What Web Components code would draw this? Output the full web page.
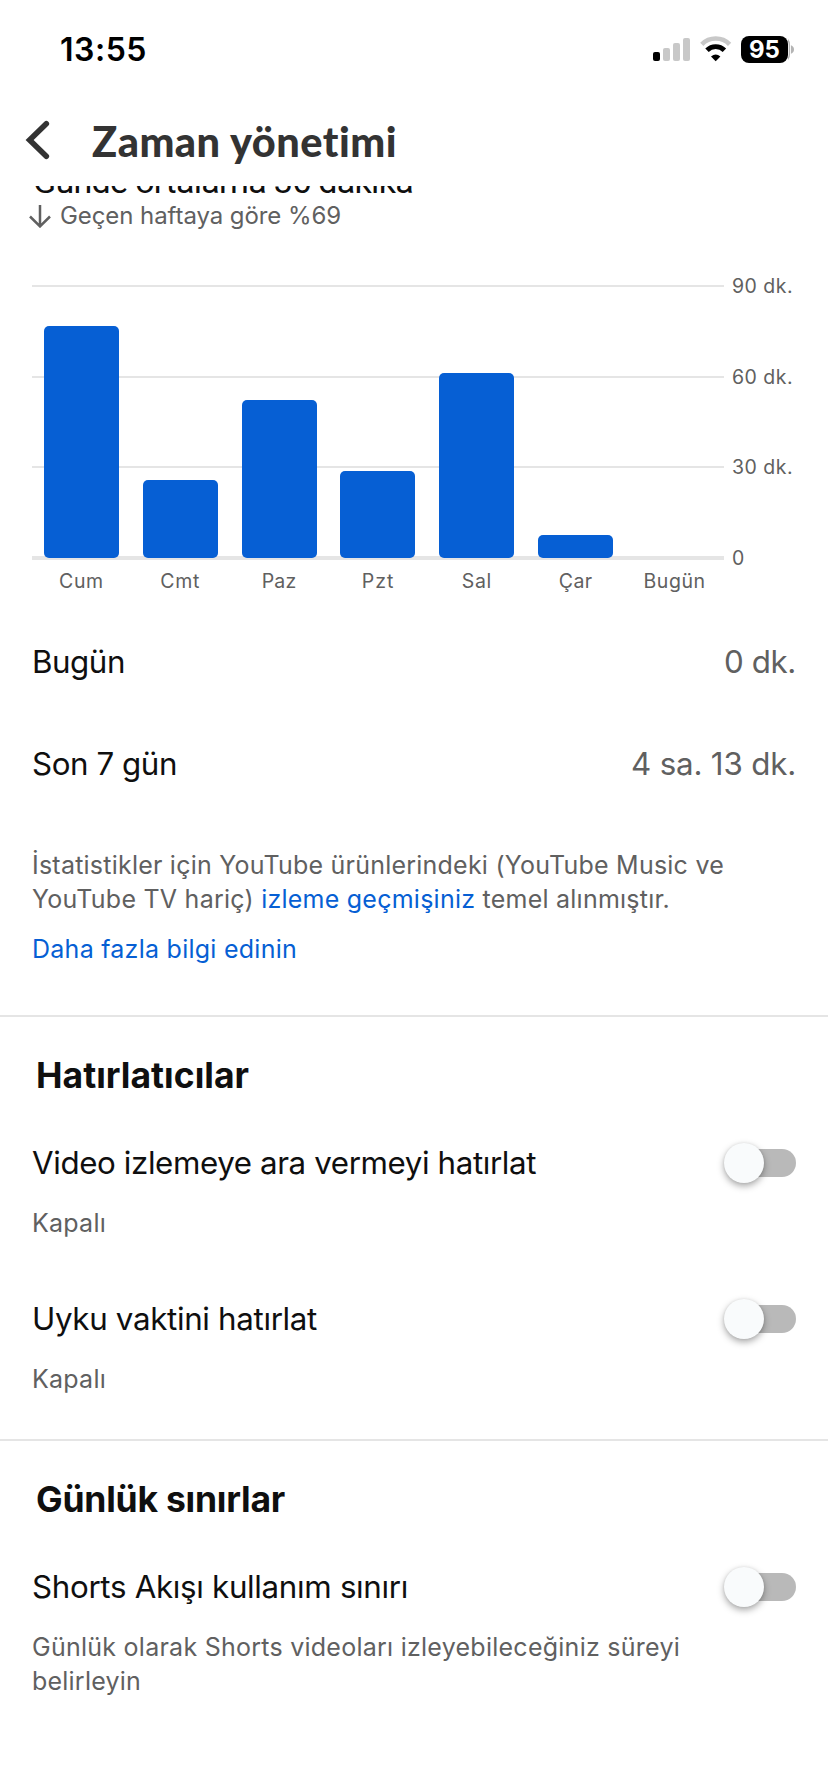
<!DOCTYPE html>
<html lang="tr">
<head>
<meta charset="utf-8">
<title>Zaman yönetimi</title>
<style>
  html, body { margin: 0; background: #fff; }
  body { width: 828px; height: 1792px; overflow: hidden; font-family: Inter, "Liberation Sans", sans-serif; color: #0f0f0f; }
</style>
</head>
<body>
<time-app></time-app>
<script>
const define = (name, html, setup) => customElements.define(name, class extends HTMLElement {
  constructor() {
    super();
    this.attachShadow({ mode: 'open' }).innerHTML = html;
  }
  connectedCallback() { if (setup) setup(this, this.shadowRoot); }
});

/* One line of text, tracked so that it fills the width given in "fit". */
define('fit-text', `
  <style>
    :host { display: block; white-space: nowrap; width: max-content; font-variant-ligatures: none; }
    span { display: inline-block; }
  </style>
  <span><slot></slot></span>`, (el, root) => {
    const target = parseFloat(el.getAttribute('fit'));
    if (!target) return;
    const span = root.querySelector('span');
    const length = el.textContent.length || el.getRootNode().host.textContent.length;
    const spacing = (target - span.getBoundingClientRect().width) / length;
    el.style.letterSpacing = spacing.toFixed(3) + 'px';
  });

define('status-bar', `
  <style>
    :host { display: flex; height: 88px; box-sizing: border-box; padding: 26px 33px 0 60px; justify-content: space-between; align-items: flex-start; color: #000; }
    .time { font-size: 32px; font-weight: 600; line-height: 48px; }
    .icons { display: flex; padding-top: 10px; }
    .signal { width: 38px; height: 27px; margin-right: 9px; }
    .wifi { width: 32px; height: 27px; margin-right: 9px; }
    .battery { display: flex; align-items: center; }
    .level { width: 47px; height: 27px; border-radius: 8px; background: #000; color: #fff; font-size: 24px; font-weight: 700; line-height: 27px; display: flex; justify-content: center; }
    .cap { width: 7px; height: 27px; }
  </style>
  <fit-text class="time" fit="87">13:55</fit-text>
  <div class="icons">
    <svg class="signal" viewBox="0 0 38 27">
      <rect x="0" y="16" width="7" height="9" rx="2" fill="#000"/>
      <g fill="#c8c8c8"><rect x="10" y="12" width="7" height="13" rx="2"/><rect x="20" y="7" width="7" height="18" rx="2"/><rect x="30" y="2" width="7" height="23" rx="2"/></g>
    </svg>
    <svg class="wifi" viewBox="0 0 32 27">
      <path d="M1.8 8.3A19.6 19.6 0 0 1 29.6 8.3" fill="none" stroke="#c8c8c8" stroke-width="4.6"/>
      <path d="M7 14.2A12.2 12.2 0 0 1 24.4 14.2" fill="none" stroke="#000" stroke-width="4.8"/>
      <path d="M15.7 25.2L11 20.4Q15.7 16.6 20.4 20.4Z" fill="#000"/>
    </svg>
    <div class="battery">
      <div class="level"><fit-text fit="31">95</fit-text></div>
      <svg class="cap" viewBox="0 0 7 27"><path d="M-3 1Q1.4 4 1.4 9V18Q1.4 23 -3 26" fill="none" stroke="#b4b4b4" stroke-width="1.4"/><path d="M3 9.3Q6 10.5 6 13.5T3 17.7Z" fill="#b4b4b4"/></svg>
    </div>
  </div>`);

define('page-header', `
  <style>
    :host { display: flex; height: 98px; align-items: flex-start; color: #333; background: #fff; }
    svg { width: 28px; height: 40px; margin: 32px 40px 0 24px; }
    .title { font-family: Lato, Roboto, sans-serif; font-weight: 900; font-size: 41.5px; line-height: 50px; padding-top: 28px; }
  </style>
  <svg viewBox="0 0 28 40"><path d="M22.3 3.7L5.6 20L22.3 36.3" fill="none" stroke="#333" stroke-width="5.6" stroke-linecap="round"/></svg>
  <fit-text class="title" fit="305"><slot></slot></fit-text>`);

define('usage-summary', `
  <style>
    :host { display: block; overflow: hidden; height: 46px; }
    .average { font-family: Roboto, sans-serif; font-size: 34px; line-height: 38px; margin: -24px 0 0 33px; }
    .trend { display: flex; gap: 9px; padding-left: 28px; color: #606060; font-size: 24px; line-height: 32px; }
    svg { width: 23px; height: 24px; margin-top: 4px; }
  </style>
  <fit-text class="average" fit="380">Günde ortalama 36 dakika</fit-text>
  <div class="trend">
    <svg viewBox="0 0 23 24"><path d="M12 1V22M2 12.5L12 22.4L22 12.5" fill="none" stroke="#606060" stroke-width="2.5"/></svg>
    <fit-text fit="281">Geçen haftaya göre %69</fit-text>
  </div>`);

define('usage-chart', `
  <style>
    :host { display: grid; grid-template-columns: 692px 1fr; column-gap: 8px; margin: 53px 0 0 32px; color: #606060; font-size: 19.5px; line-height: 24px; }
    .plot { display: grid; height: 275px; }
    .lines, .bars { grid-area: 1 / 1; }
    .lines, .axis { display: grid; grid-template-rows: 91px 90px 90px 4px; }
    .lines i { border-top: 2px solid #e5e5e5; }
    .lines i:last-child { border-width: 4px; }
    .bars { display: grid; grid-template-columns: repeat(7, 1fr); align-items: end; justify-items: center; padding-bottom: 2px; }
    .bars b { width: 75px; border-radius: 5px; background: #065fd4; }
    .axis fit-text { margin-top: -11px; height: 24px; }
    .axis fit-text:last-child { margin-top: -10px; }
    .days { display: grid; grid-template-columns: repeat(7, 1fr); justify-items: center; padding-top: 9px; }
  </style>
  <div class="plot">
    <div class="lines"><i></i><i></i><i></i><i></i></div>
    <div class="bars"></div>
  </div>
  <div class="axis"><fit-text fit="61">90 dk.</fit-text><fit-text fit="61">60 dk.</fit-text><fit-text fit="61">30 dk.</fit-text><fit-text>0</fit-text></div>
  <div class="days"></div>`, (el, root) => {
    const data = [['Cum', 232, 45], ['Cmt', 78, 40], ['Paz', 158, 35], ['Pzt', 87, 32.5], ['Sal', 185, 30], ['Çar', 23, 34], ['Bugün', 0, 62]];
    root.querySelector('.bars').innerHTML = data.map(d => `<b style="height:${d[1]}px"></b>`).join('');
    root.querySelector('.days').innerHTML = data.map(d => `<fit-text fit="${d[2]}">${d[0]}</fit-text>`).join('');
  });

define('stat-row', `
  <style>
    :host { display: flex; height: 102px; align-items: center; justify-content: space-between; padding: 0 32px; font-size: 31.3px; line-height: 40px; }
    .value { color: #606060; }
  </style>
  <slot></slot><div class="value"><slot name="value"></slot></div>`);

define('stats-note', `
  <style>
    :host { display: block; padding: 33px 32px 49px; font-size: 25px; line-height: 34px; color: #606060; }
    .more { margin-top: 16px; }
  </style>
  <slot></slot><div class="more"><slot name="more"></slot></div>`);

define('settings-section', `
  <style>
    :host { display: block; border-top: 2px solid #e5e5e5; padding: 37px 32px 43px; }
    .heading { font-size: 35.5px; font-weight: 700; line-height: 44px; padding-left: 4px; margin-bottom: 45px; }
    .items { display: flex; flex-direction: column; gap: 59px; }
  </style>
  <div class="heading"><slot name="heading"></slot></div>
  <div class="items"><slot></slot></div>`);

define('toggle-switch', `
  <style>
    :host { display: flex; align-items: center; width: 72px; height: 40px; }
    .track { flex: 1; height: 28px; margin-left: 8px; border-radius: 14px; background: #b9b9b9; display: flex; align-items: center; }
    .knob { width: 40px; height: 40px; margin-left: -8px; border-radius: 50%; background: #f9fbfc; box-shadow: 0 3px 7px rgba(0,0,0,.34), 0 0 3px rgba(0,0,0,.08); }
  </style>
  <div class="track"><div class="knob"></div></div>`);

define('setting-row', `
  <style>
    :host { display: block; }
    .top { display: flex; justify-content: space-between; font-size: 31.3px; line-height: 40px; height: 40px; margin-bottom: 23px; }
    .detail { color: #606060; font-size: 25px; line-height: 34px; }
  </style>
  <div class="top"><slot></slot><toggle-switch></toggle-switch></div>
  <div class="detail"><slot name="detail"></slot></div>`);

define('time-app', `
  <style>:host { display: block; width: 828px; } a { color: #065fd4; text-decoration: none; } stat-row.first { margin-top: 18px; }</style>
  <status-bar></status-bar>
  <page-header>Zaman yönetimi</page-header>
  <usage-summary></usage-summary>
  <usage-chart></usage-chart>
  <stat-row class="first"><fit-text fit="93">Bugün</fit-text><fit-text slot="value" fit="72">0 dk.</fit-text></stat-row>
  <stat-row><fit-text fit="145">Son 7 gün</fit-text><fit-text slot="value" fit="165">4 sa. 13 dk.</fit-text></stat-row>
  <stats-note>
    <fit-text fit="692">İstatistikler için YouTube ürünlerindeki (YouTube Music ve</fit-text>
    <fit-text fit="638">YouTube TV hariç) <a>izleme geçmişiniz</a> temel alınmıştır.</fit-text>
    <fit-text slot="more" fit="265"><a>Daha fazla bilgi edinin</a></fit-text>
  </stats-note>
  <settings-section>
    <fit-text slot="heading" fit="213">Hatırlatıcılar</fit-text>
    <setting-row><fit-text fit="504">Video izlemeye ara vermeyi hatırlat</fit-text><fit-text slot="detail" fit="74">Kapalı</fit-text></setting-row>
    <setting-row><fit-text fit="285">Uyku vaktini hatırlat</fit-text><fit-text slot="detail" fit="74">Kapalı</fit-text></setting-row>
  </settings-section>
  <settings-section>
    <fit-text slot="heading" fit="249">Günlük sınırlar</fit-text>
    <setting-row><fit-text fit="376">Shorts Akışı kullanım sınırı</fit-text>
      <fit-text slot="detail" fit="648">Günlük olarak Shorts videoları izleyebileceğiniz süreyi</fit-text>
      <fit-text slot="detail" fit="109">belirleyin</fit-text></setting-row>
  </settings-section>`);
</script>
</body>
</html>
